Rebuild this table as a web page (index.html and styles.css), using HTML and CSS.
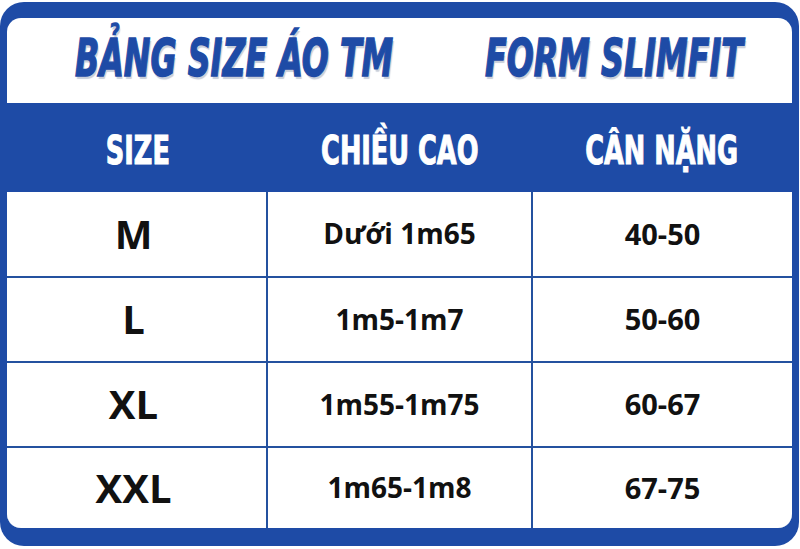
FILE: index.html
```html
<!DOCTYPE html>
<html lang="vi">
<head>
<meta charset="utf-8">
<title>Bảng size áo TM</title>
<link rel="stylesheet" href="styles.css">
</head>
<body>
<div class="frame">
  <div class="inner">
    <div class="title-bar">
      <span class="title title-left">BẢNG SIZE ÁO TM</span>
      <span class="title title-right">FORM SLIMFIT</span>
    </div>
    <div class="head">
      <div class="hcell"><span class="htext">SIZE</span></div>
      <div class="hcell"><span class="htext">CHIỀU CAO</span></div>
      <div class="hcell"><span class="htext">CÂN NẶNG</span></div>
    </div>
    <div class="grid">
      <div class="cell size r1">M</div>
      <div class="cell r1">Dưới 1m65</div>
      <div class="cell r1">40-50</div>
      <div class="cell size r2">L</div>
      <div class="cell r2">1m5-1m7</div>
      <div class="cell r2">50-60</div>
      <div class="cell size r3">XL</div>
      <div class="cell r3">1m55-1m75</div>
      <div class="cell r3">60-67</div>
      <div class="cell size r4">XXL</div>
      <div class="cell r4">1m65-1m8</div>
      <div class="cell r4">67-75</div>
    </div>
  </div>
</div>
</body>
</html>
```
FILE: styles.css
```css
html, body {
  margin: 0;
  padding: 0;
  background: #ffffff;
}
body {
  width: 800px;
  height: 549px;
  overflow: hidden;
  padding-top: 2px;
  box-sizing: border-box;
}
.frame {
  width: 799px;
  height: 544px;
  box-sizing: border-box;
  background: #1e4ba6;
  border-radius: 24px;
  padding: 16px 7px 18px 7px;
}
.inner {
  height: 100%;
  background: #ffffff;
  border-radius: 14px;
  overflow: hidden;
  display: flex;
  flex-direction: column;
}
.title-bar {
  height: 85px;
  display: flex;
  align-items: center;
  padding-left: 68px;
  padding-bottom: 6px;
  box-sizing: border-box;
}
.title {
  font-family: "DejaVu Sans Condensed", "DejaVu Sans", sans-serif;
  font-weight: 700;
  font-style: italic;
  font-size: 52px;
  color: #1e4ba6;
  -webkit-text-stroke: 1.4px #1e4ba6;
  text-shadow: 2px 3px 1px #c9cfda;
  display: inline-block;
  transform: scaleX(0.68);
  transform-origin: left center;
  white-space: nowrap;
}
.title-left {
  width: 410px;
}
.head {
  height: 89px;
  background: #1e4ba6;
  display: grid;
  grid-template-columns: 261px 263px 261px;
}
.hcell {
  display: flex;
  align-items: center;
  justify-content: center;
  padding-top: 5px;
  box-sizing: border-box;
}
.htext {
  font-family: "DejaVu Sans Condensed", "DejaVu Sans", sans-serif;
  font-weight: 700;
  font-size: 39px;
  color: #ffffff;
  -webkit-text-stroke: 1px #ffffff;
  display: inline-block;
  transform: scaleX(0.73);
  white-space: nowrap;
}
.grid {
  flex: 1;
  display: grid;
  grid-template-columns: 259px 263px 259px;
  grid-template-rows: 84px 83px 83px 1fr;
  gap: 2px;
  background: #24519f;
}
.cell {
  background: #ffffff;
  display: flex;
  align-items: center;
  justify-content: center;
  font-family: "Open Sans", "Noto Sans", sans-serif;
  font-weight: 700;
  font-size: 28px;
  color: #111111;
  padding-bottom: 2px;
  box-sizing: border-box;
}
.cell:nth-child(3n) {
  font-size: 29px;
}
.size {
  font-size: 40px;
  padding-right: 6px;
}
```
